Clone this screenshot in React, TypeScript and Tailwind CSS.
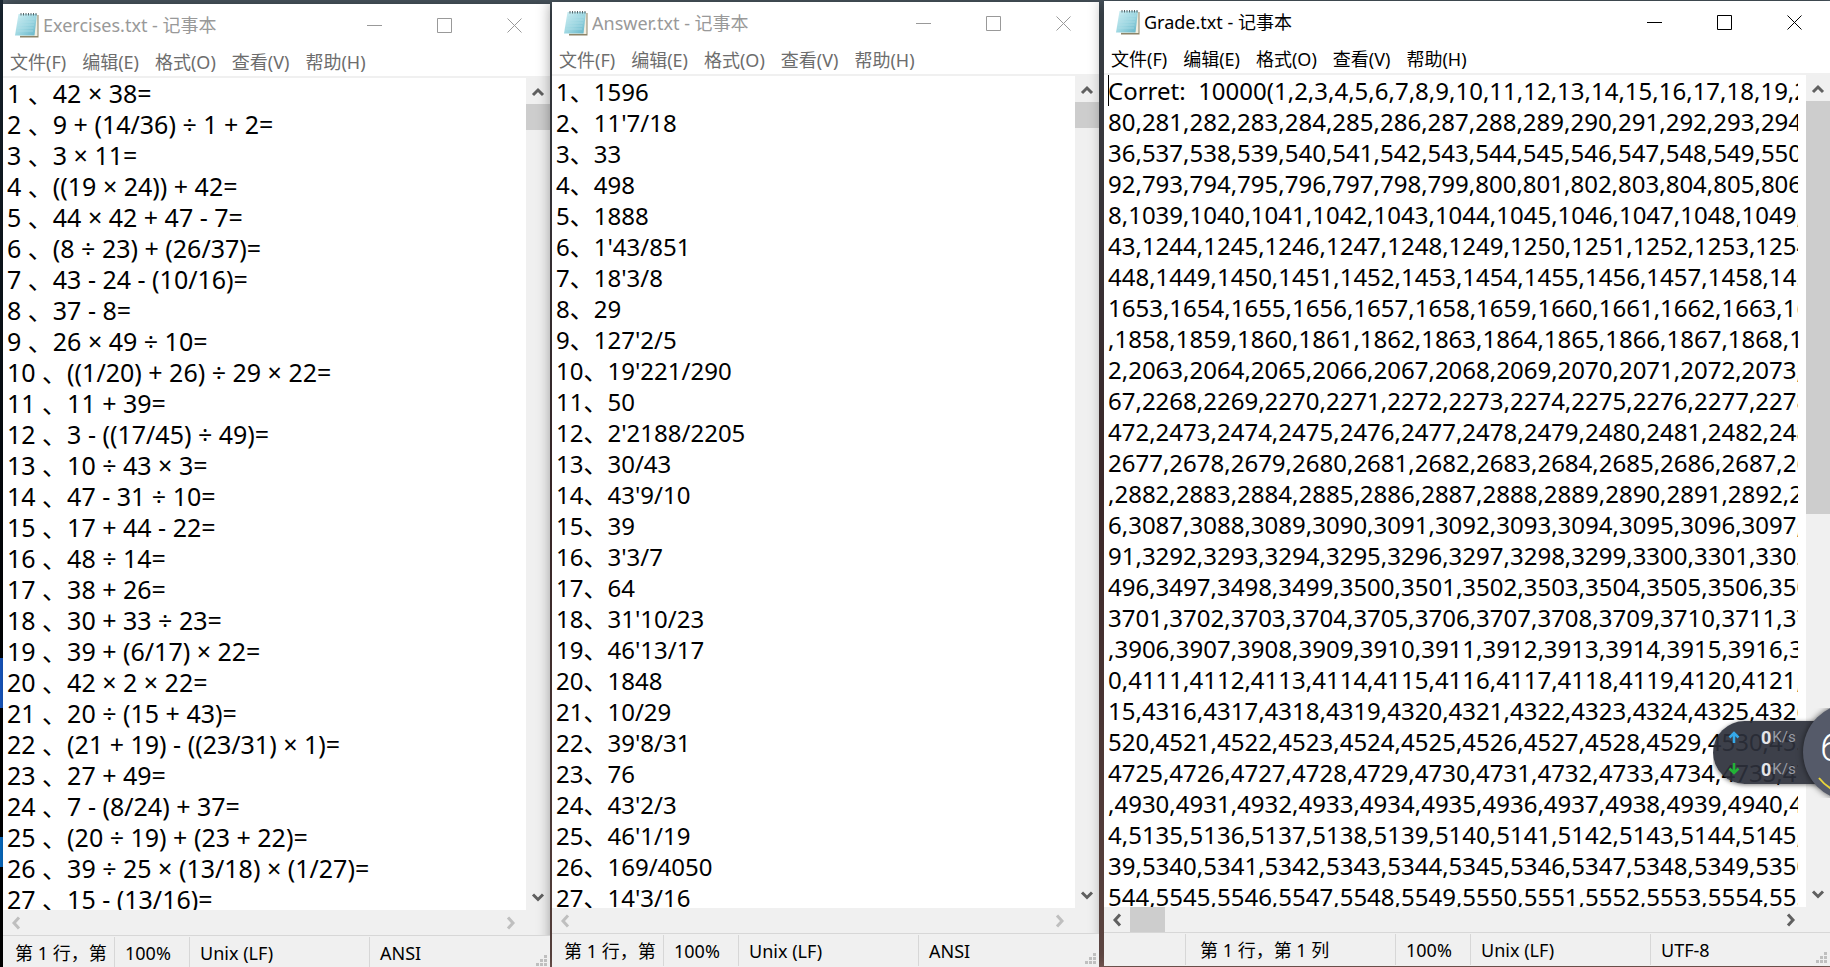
import { useId, type ReactNode } from "react";

type Pane = { text: string; className: string };

type NotepadProps = {
  file: string;
  body: string;
  status: Pane[];
  active?: boolean;
  vThumb: string;
  hThumb?: string;
  textSize: string;
  className: string;
};

const menus = ["文件(F)", "编辑(E)", "格式(O)", "查看(V)", "帮助(H)"];

const exercises = [
  "42 × 38=",
  "9 + (14/36) ÷ 1 + 2=",
  "3 × 11=",
  "((19 × 24)) + 42=",
  "44 × 42 + 47 - 7=",
  "(8 ÷ 23) + (26/37)=",
  "43 - 24 - (10/16)=",
  "37 - 8=",
  "26 × 49 ÷ 10=",
  "((1/20) + 26) ÷ 29 × 22=",
  "11 + 39=",
  "3 - ((17/45) ÷ 49)=",
  "10 ÷ 43 × 3=",
  "47 - 31 ÷ 10=",
  "17 + 44 - 22=",
  "48 ÷ 14=",
  "38 + 26=",
  "30 + 33 ÷ 23=",
  "39 + (6/17) × 22=",
  "42 × 2 × 22=",
  "20 ÷ (15 + 43)=",
  "(21 + 19) - ((23/31) × 1)=",
  "27 + 49=",
  "7 - (8/24) + 37=",
  "(20 ÷ 19) + (23 + 22)=",
  "39 ÷ 25 × (13/18) × (1/27)=",
  "15 - (13/16)=",
];

const answers = [
  "1596", "11'7/18", "33", "498", "1888", "1'43/851", "18'3/8", "29", "127'2/5",
  "19'221/290", "50", "2'2188/2205", "30/43", "43'9/10", "39", "3'3/7", "64",
  "31'10/23", "46'13/17", "1848", "10/29", "39'8/31", "76", "43'2/3", "46'1/19",
  "169/4050", "14'3/16",
];

// each line of the grade file: the tail of a broken number, then the next full one
const gradeLines: [string, number][] = [
  ["Corret:  10000(1", 2],
  ["80", 281],
  ["36", 537],
  ["92", 793],
  ["8", 1039],
  ["43", 1244],
  ["448", 1449],
  ["1653", 1654],
  ["", 1858],
  ["2", 2063],
  ["67", 2268],
  ["472", 2473],
  ["2677", 2678],
  ["", 2882],
  ["6", 3087],
  ["91", 3292],
  ["496", 3497],
  ["3701", 3702],
  ["", 3906],
  ["0", 4111],
  ["15", 4316],
  ["520", 4521],
  ["4725", 4726],
  ["", 4930],
  ["4", 5135],
  ["39", 5340],
  ["544", 5545],
];

const exerciseText = exercises.map((line, i) => `${i + 1} 、${line}`).join("\n");
const answerText = answers.map((line, i) => `${i + 1}、${line}`).join("\n");
const gradeText = gradeLines
  .map(([lead, next]) => [lead, ...Array.from({ length: 20 }, (_, i) => next + i)].join(","))
  .join("\n");

const narrowStatus: Pane[] = [
  { text: "第 1 行，第", className: "w-28 pl-3" },
  { text: "100%", className: "w-[75px] pl-[10px]" },
  { text: "Unix (LF)", className: "w-[180px] pl-[10px]" },
  { text: "ANSI", className: "flex-1 pl-[10px]" },
];

const wideStatus: Pane[] = [
  { text: "", className: "w-[82px]" },
  { text: "第 1 行，第 1 列", className: "w-[210px] pl-[14px]" },
  { text: "100%", className: "w-[75px] pl-[10px]" },
  { text: "Unix (LF)", className: "w-[180px] pl-[10px]" },
  { text: "UTF-8", className: "flex-1 pl-[10px]" },
];

function NotepadIcon() {
  const id = useId();
  return (
    <svg viewBox="0 0 24 26" className="h-[26px] w-6 shrink-0">
      <defs>
        <linearGradient id={id} x1="0" y1="0" x2="1" y2="1">
          <stop offset="0" stopColor="#d3f1f5" />
          <stop offset="0.55" stopColor="#9ad5e0" />
          <stop offset="1" stopColor="#62b3c7" />
        </linearGradient>
      </defs>
      <path d="M6 3h17.500v22.500H5z" fill="#8d8468" />
      <path d="M6 3h16.500v21H5z" fill="#f1eee0" />
      <path d="M3.500 2h18.500l-2.500 21.500H0z" fill={`url(#${id})`} />
      <path d="M4 7h16M3.500 10h16M3 13h16M2.500 16h16M2 19h16" stroke="#b5e1ea" strokeWidth="0.6" />
      <path d="M6 1v2.500M8.500 1v2.500M11 1v2.500M13.500 1v2.500M16 1v2.500M18.500 1v2.500M21 1v2.500" stroke="#56666b" strokeWidth="1" />
    </svg>
  );
}

function CaptionButton({ label, children }: { label: string; children: ReactNode }) {
  return (
    <button aria-label={label} className="flex h-full w-[70px] items-center justify-center">
      <svg viewBox="0 0 16 16" className="size-4" fill="none" stroke="currentColor" strokeWidth="1">
        {children}
      </svg>
    </button>
  );
}

const arrows = {
  up: "M4 13 9 8l5 5",
  down: "M4 6.500l5 5 5-5",
  left: "M13 3.500 8 9l5 5.500",
  right: "M7 3.500 12 9l-5 5.500",
};

function ScrollButton({ dir, muted }: { dir: keyof typeof arrows; muted?: boolean }) {
  return (
    <button
      aria-label={`Scroll ${dir}`}
      className={`flex h-[26px] w-6 shrink-0 items-center justify-center ${muted ? "text-[#bfbfbf]" : "text-[#606060]"}`}
    >
      <svg viewBox="0 0 18 18" className="size-[18px]" fill="none" stroke="currentColor" strokeWidth="3">
        <path d={arrows[dir]} />
      </svg>
    </button>
  );
}

function ResizeGrip() {
  return (
    <svg viewBox="0 0 12 12" className="absolute right-[2px] bottom-[2px] size-3" fill="#bfbfbf">
      <path d="M8 0h3v3H8zM4 4h3v3H4zM8 4h3v3H8zM0 8h3v3H0zM4 8h3v3H4zM8 8h3v3H8z" />
    </svg>
  );
}

function Notepad({ file, body, status, active, vThumb, hThumb, textSize, className }: NotepadProps) {
  return (
    <section
      className={`flex h-[calc(100vh-2px)] min-w-0 basis-0 flex-col bg-white shadow-[0_0_14px_rgba(0,0,0,0.45)] ${className}`}
    >
      <header className={`flex h-11 shrink-0 items-center pb-[2px] ${active ? "text-black" : "text-[#999]"}`}>
        <div className="flex min-w-0 flex-1 items-center gap-1 pl-3">
          <NotepadIcon />
          <h1 className="truncate text-[18px] leading-6">{file} - 记事本</h1>
        </div>
        <CaptionButton label="Minimize">
          <path d="M0 8.500h15" />
        </CaptionButton>
        <CaptionButton label="Maximize">
          <path d="M.5 1.500h14v14H.5z" />
        </CaptionButton>
        <CaptionButton label="Close">
          <path d="M.5 1.500l14 14M14.500 1.500l-14 14" />
        </CaptionButton>
      </header>

      <nav
        className={`flex h-[30px] shrink-0 items-center gap-4 border-b-2 border-[#f0f0f0] pl-[7px] text-[18px] leading-6 ${active ? "text-black" : "text-[#6d6d6d]"}`}
      >
        {menus.map((menu) => (
          <button key={menu} className="whitespace-nowrap">
            {menu}
          </button>
        ))}
      </nav>

      <div className="flex min-h-0 flex-1">
        <div className="relative min-w-0 flex-1 pr-2 pl-1">
          <textarea
            aria-label={file}
            readOnly
            wrap="off"
            defaultValue={body}
            className={`block h-full w-full resize-none overflow-hidden leading-[31px] text-black outline-none ${textSize}`}
          />
          {active && <span className="absolute top-0 left-1 h-[31px] w-px bg-black" />}
        </div>
        <div className="flex w-6 shrink-0 flex-col bg-[#f0f0f0]">
          <ScrollButton dir="up" />
          <div className="flex-1">
            <div className={`w-full bg-[#cdcdcd] ${vThumb}`} />
          </div>
          <ScrollButton dir="down" />
        </div>
      </div>

      <div className="flex h-[25px] shrink-0 items-center bg-[#f0f0f0] pr-7">
        <ScrollButton dir="left" muted={!hThumb} />
        <div className="h-full flex-1">{hThumb && <div className={`h-full bg-[#cdcdcd] ${hThumb}`} />}</div>
        <ScrollButton dir="right" muted={!hThumb} />
      </div>

      <footer className="relative flex h-[34px] shrink-0 border-t border-[#d7d7d7] bg-[#f0f0f0] py-px text-[18px] leading-[33px] text-black">
        {status.map((pane, i) => (
          <div
            key={i}
            className={`overflow-hidden whitespace-nowrap ${i < status.length - 1 ? "border-r border-[#d7d7d7]" : ""} ${pane.className}`}
          >
            {pane.text}
          </div>
        ))}
        <ResizeGrip />
      </footer>
    </section>
  );
}

function SpeedRow({ color, path }: { color: string; path: string }) {
  return (
    <div className="flex h-8 items-center">
      <svg viewBox="0 0 12 12" className="size-3" fill="none" stroke={color} strokeWidth="2.500">
        <path d={path} />
      </svg>
      <span className="ml-[21px] text-[18px] font-bold text-[#e4e5e8]">0</span>
      <span className="ml-px text-[15px] text-[#9a9da5]">K/s</span>
    </div>
  );
}

function NetMeter() {
  return (
    <aside className="absolute top-[708px] right-0 h-[90px] w-[117px] overflow-hidden font-[Roboto,sans-serif]">
      <div className="mt-[13px] h-[63px] rounded-l-full bg-[#2c303b]/92 pl-[15px] shadow-[0_1px_4px_rgba(0,0,0,0.5)]">
        <SpeedRow color="#35a8e8" path="M6 12V2M1.500 6.500 6 2l4.500 4.500" />
        <SpeedRow color="#22b336" path="M6 0v10M1.500 5.500 6 10l4.500-4.500" />
      </div>
      <div className="absolute top-[-5px] left-[90px] flex size-[98px] items-center rounded-full bg-[#555a69] pb-2 pl-[17px] font-[Roboto,sans-serif] text-[38px] leading-none font-light text-white shadow-[0_0_6px_rgba(0,0,0,0.6)]">
        6
        <svg viewBox="0 0 98 98" className="absolute inset-0 size-full" fill="none" stroke="#e8d43a" strokeWidth="2">
          <path d="M16 75A42 42 0 0 0 49 91" />
        </svg>
      </div>
    </aside>
  );
}

export default function App() {
  return (
    <main className="relative flex h-screen overflow-hidden bg-linear-to-b from-[#4d5a64] via-[#54393b] to-[#86655f] font-['Noto_Sans','Noto_Sans_CJK_SC',sans-serif]">
      <div className="flex w-[3px] shrink-0 flex-col bg-linear-to-b from-[#1c2a36] to-black">
        <div className="flex-[66]" />
        <div className="flex-[5] bg-[#1b62d8]" />
        <div className="flex-[13]" />
        <div className="flex-[3] bg-[#0a78d8]" />
        <div className="flex-[10]" />
      </div>
      <Notepad
        file="Exercises.txt"
        body={exerciseText}
        status={narrowStatus}
        vThumb="h-[26px]"
        textSize="text-[25px]"
        className="mt-1 grow-[547]"
      />
      <Notepad
        file="Answer.txt"
        body={answerText}
        status={narrowStatus}
        vThumb="h-[26px]"
        textSize="text-[24px]"
        className="mt-[2px] ml-[2px] grow-[547]"
      />
      <Notepad
        file="Grade.txt"
        body={gradeText}
        status={wideStatus}
        active
        vThumb="h-[413px]"
        hThumb="ml-[2px] w-[35px]"
        textSize="text-[24px]"
        className="mt-px ml-[5px] grow-[726]"
      />
      <NetMeter />
    </main>
  );
}
